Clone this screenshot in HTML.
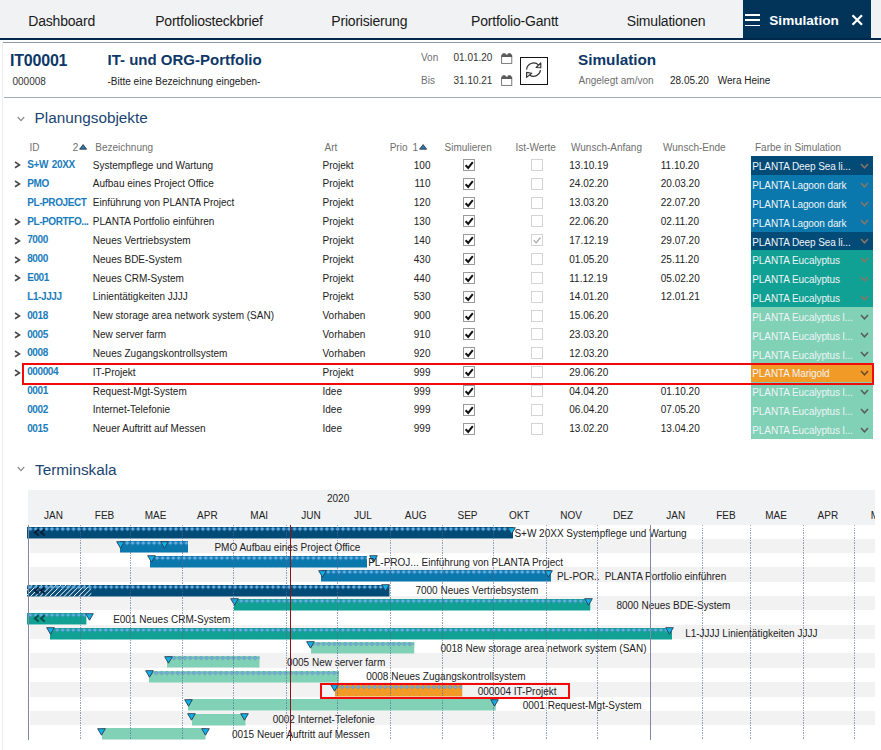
<!DOCTYPE html>
<html><head><meta charset="utf-8"><style>
*{box-sizing:border-box}
html,body{margin:0;padding:0}
body{width:881px;height:750px;overflow:hidden;position:relative;background:#fff;font-family:"Liberation Sans",sans-serif;color:#222}
.a{position:absolute;white-space:nowrap}
.tab{position:absolute;top:0;height:38px;line-height:38px;font-size:14px;letter-spacing:-0.2px;color:#1a1a1a}
.t10{font-size:10px}
.hd{font-size:10px;color:#6f6f6f}
.id{font-size:10px;font-weight:bold;color:#1a7cbc;letter-spacing:-0.4px;word-spacing:1.5px}
.cb{position:absolute;width:12px;height:12px;border:1.3px solid #9a9a9a;background:#fff}
.cb2{position:absolute;width:12px;height:12px;border:1px solid #d4d4d4;background:#fff}
.fb{position:absolute;left:751px;width:122px;font-size:10px;color:#f2f6f8;padding-left:1.3px;letter-spacing:-0.1px}
.gl{position:absolute;font-size:10px;color:#222;white-space:nowrap}
.bar{position:absolute;height:11.5px}
.tri{position:absolute;width:0;height:0}
</style></head><body>

<div class="a" style="left:0;top:0;width:881px;height:38px;background:#f1f2f4"></div>
<div class="a" style="left:743px;top:0;width:128px;height:38px;background:#02345a"></div>
<div class="a" style="left:0;top:38px;width:881px;height:2px;background:#00284c"></div>
<div class="tab" style="left:28.299999999999997px;top:1.8px">Dashboard</div>
<div class="tab" style="left:155.20000000000002px;top:1.8px">Portfoliosteckbrief</div>
<div class="tab" style="left:331.29999999999995px;top:1.8px">Priorisierung</div>
<div class="tab" style="left:471.0px;top:1.8px">Portfolio-Gantt</div>
<div class="tab" style="left:626.8px;top:1.8px">Simulationen</div>
<div class="a" style="left:745px;top:14.2px;width:14.5px;height:1.6px;background:#fff"></div>
<div class="a" style="left:745px;top:19.4px;width:14.5px;height:1.6px;background:#fff"></div>
<div class="a" style="left:745px;top:24.6px;width:14.5px;height:1.6px;background:#fff"></div>
<div class="a" style="left:769.3px;top:1.5px;height:38px;line-height:38px;font-size:13.6px;font-weight:bold;color:#fff">Simulation</div>
<svg class="a" style="left:851px;top:14px" width="13" height="12" viewBox="0 0 13 12"><path d="M1.5 1.2 L11 10.8 M11 1.2 L1.5 10.8" stroke="#fff" stroke-width="2.2"/></svg>
<div class="a" style="left:2px;top:42px;width:1px;height:708px;background:#ececec"></div>
<div class="a" style="left:3px;top:42px;width:878px;height:1px;background:#8e99a8"></div>
<div class="a" style="left:4px;top:97px;width:877px;height:1px;background:#a3abb6"></div>
<div class="a" style="left:10px;top:51.5px;font-size:16px;font-weight:bold;color:#0d3868;letter-spacing:-0.2px">IT00001</div>
<div class="a" style="left:12.5px;top:75.8px;font-size:10px;color:#333">000008</div>
<div class="a" style="left:107.5px;top:51.2px;font-size:15px;font-weight:bold;color:#0d3868">IT- und ORG-Portfolio</div>
<div class="a" style="left:107.5px;top:75.8px;font-size:10px;color:#222">-Bitte eine Bezeichnung eingeben-</div>
<div class="a" style="left:421px;top:51.5px;font-size:10px;color:#6f6f6f">Von</div>
<div class="a" style="left:421px;top:74.5px;font-size:10px;color:#6f6f6f">Bis</div>
<div class="a" style="left:453.5px;top:51.5px;font-size:10px;color:#333">01.01.20</div>
<div class="a" style="left:453.5px;top:74.5px;font-size:10px;color:#333">31.10.21</div>
<svg class="a" style="left:501px;top:53.1px" width="12" height="11" viewBox="0 0 12 11"><rect x="0.6" y="3.2" width="10.2" height="7.2" fill="#fff" stroke="#6b6b6b" stroke-width="0.9"/><rect x="0.3" y="1.6" width="10.8" height="2.4" fill="#5a5a5a"/><rect x="1.2" y="0.2" width="3.6" height="2.4" rx="1" fill="#5a5a5a"/><rect x="6.6" y="0.2" width="3.6" height="2.4" rx="1" fill="#5a5a5a"/></svg>
<svg class="a" style="left:501px;top:75.2px" width="12" height="11" viewBox="0 0 12 11"><rect x="0.6" y="3.2" width="10.2" height="7.2" fill="#fff" stroke="#6b6b6b" stroke-width="0.9"/><rect x="0.3" y="1.6" width="10.8" height="2.4" fill="#5a5a5a"/><rect x="1.2" y="0.2" width="3.6" height="2.4" rx="1" fill="#5a5a5a"/><rect x="6.6" y="0.2" width="3.6" height="2.4" rx="1" fill="#5a5a5a"/></svg>
<div class="a" style="left:520.2px;top:57.2px;width:27.6px;height:27.5px;border:1.4px solid #151515"></div>
<svg class="a" style="left:520.2px;top:57.2px" width="28" height="28" viewBox="0 0 28 28"><path d="M6.6 12.6 A7.1 7.1 0 0 1 18.5 7.9" fill="none" stroke="#333" stroke-width="1.15"/><path d="M20.8 5.8 L20.8 10.8 L16.1 10.5 Z" fill="#e8e8e8" stroke="#333" stroke-width="1.1" stroke-linejoin="round"/><path d="M20.5 13.2 A7.1 7.1 0 0 1 9.7 18.2" fill="none" stroke="#333" stroke-width="1.15"/><path d="M6.6 15.4 L6.6 20.4 L11.8 16.3 Z" fill="#e8e8e8" stroke="#333" stroke-width="1.1" stroke-linejoin="round"/></svg>
<div class="a" style="left:578px;top:51px;font-size:15.3px;font-weight:bold;color:#0d3868">Simulation</div>
<div class="a" style="left:578.5px;top:74.5px;font-size:10px;color:#6f6f6f">Angelegt am/von</div>
<div class="a" style="left:670px;top:74.5px;font-size:10px;color:#222">28.05.20</div>
<div class="a" style="left:717.8px;top:74.5px;font-size:10px;color:#222">Wera Heine</div>
<svg class="a" style="left:16.5px;top:115.5px" width="8" height="6" viewBox="0 0 8 6"><path d="M0.8 1 L4 4.6 L7.2 1" fill="none" stroke="#8a8a8a" stroke-width="1.2"/></svg>
<div class="a" style="left:34.6px;top:108.6px;font-size:15.3px;color:#1a4470">Planungsobjekte</div>
<svg class="a" style="left:16.5px;top:466.2px" width="8" height="6" viewBox="0 0 8 6"><path d="M0.8 1 L4 4.6 L7.2 1" fill="none" stroke="#8a8a8a" stroke-width="1.2"/></svg>
<div class="a" style="left:35px;top:461.2px;font-size:15.3px;color:#1a4470">Terminskala</div>
<div class="a hd" style="left:29.5px;top:141.5px">ID</div>
<div class="a hd" style="left:72.7px;top:141.5px">2</div>
<svg class="a" style="left:78.6px;top:144.3px" width="9" height="6" viewBox="0 0 9 6"><path d="M0.6 5.2 L4.1 0.6 L7.6 5.2 Z" fill="#2a7ab8" stroke="#2a2a2a" stroke-width="0.8" stroke-linejoin="round"/></svg>
<div class="a hd" style="left:95.3px;top:141.5px">Bezeichnung</div>
<div class="a hd" style="left:324.5px;top:141.5px">Art</div>
<div class="a hd" style="left:389.7px;top:141.5px">Prio</div>
<div class="a hd" style="left:412.5px;top:141.5px">1</div>
<svg class="a" style="left:419px;top:144.3px" width="9" height="6" viewBox="0 0 9 6"><path d="M0.6 5.2 L4.1 0.6 L7.6 5.2 Z" fill="#2a7ab8" stroke="#2a2a2a" stroke-width="0.8" stroke-linejoin="round"/></svg>
<div class="a hd" style="left:444.5px;top:141.5px">Simulieren</div>
<div class="a hd" style="left:515.5px;top:141.5px">Ist-Werte</div>
<div class="a hd" style="left:571px;top:141.5px">Wunsch-Anfang</div>
<div class="a hd" style="left:663px;top:141.5px">Wunsch-Ende</div>
<div class="a hd" style="left:755px;top:141.5px">Farbe in Simulation</div>
<svg class="a" style="left:13.8px;top:161.39999999999998px" width="7" height="8" viewBox="0 0 7 8"><path d="M1 1 L5.4 3.9 L1 6.8" fill="none" stroke="#4a4a4a" stroke-width="1.7"/></svg>
<div class="a id" style="left:27.2px;top:159.1px">S+W 20XX</div>
<div class="a t10" style="left:92.8px;top:159.6px;color:#222">Systempflege und Wartung</div>
<div class="a t10" style="left:322.5px;top:159.6px;color:#222">Projekt</div>
<div class="a t10" style="left:380px;top:159.6px;width:50.5px;text-align:right;color:#222">100</div>
<div class="cb" style="left:463.3px;top:159.0px"></div>
<svg class="a" style="left:463.3px;top:159.0px" width="12" height="12" viewBox="0 0 12 12"><path d="M2.6 6.3 L5.2 8.9 L9.8 3.2" fill="none" stroke="#111" stroke-width="2"/></svg>
<div class="cb2" style="left:531.3px;top:159.0px"></div>
<div class="a t10" style="left:569.3px;top:159.6px;color:#222">13.10.19</div>
<div class="a t10" style="left:660.8px;top:159.6px;color:#222">11.10.20</div>
<div class="fb" style="top:156.2px;height:19.029999999999998px;line-height:21.029999999999998px;background:#034b77;color:#eef4f7">PLANTA Deep Sea li...</div>
<svg class="a" style="left:859.5px;top:162.89999999999998px" width="9" height="6" viewBox="0 0 9 6"><path d="M1 1 L4.5 4.8 L8 1" fill="none" stroke="#8a7565" stroke-width="1.5"/></svg>
<svg class="a" style="left:13.8px;top:180.22999999999996px" width="7" height="8" viewBox="0 0 7 8"><path d="M1 1 L5.4 3.9 L1 6.8" fill="none" stroke="#4a4a4a" stroke-width="1.7"/></svg>
<div class="a id" style="left:27.2px;top:177.92999999999998px">PMO</div>
<div class="a t10" style="left:92.8px;top:178.42999999999998px;color:#222">Aufbau eines Project Office</div>
<div class="a t10" style="left:322.5px;top:178.42999999999998px;color:#222">Projekt</div>
<div class="a t10" style="left:380px;top:178.42999999999998px;width:50.5px;text-align:right;color:#222">110</div>
<div class="cb" style="left:463.3px;top:177.82999999999998px"></div>
<svg class="a" style="left:463.3px;top:177.82999999999998px" width="12" height="12" viewBox="0 0 12 12"><path d="M2.6 6.3 L5.2 8.9 L9.8 3.2" fill="none" stroke="#111" stroke-width="2"/></svg>
<div class="cb2" style="left:531.3px;top:177.82999999999998px"></div>
<div class="a t10" style="left:569.3px;top:178.42999999999998px;color:#222">24.02.20</div>
<div class="a t10" style="left:660.8px;top:178.42999999999998px;color:#222">20.03.20</div>
<div class="fb" style="top:175.02999999999997px;height:19.029999999999998px;line-height:21.029999999999998px;background:#0a78ad;color:#eef4f7">PLANTA Lagoon dark</div>
<svg class="a" style="left:859.5px;top:181.72999999999996px" width="9" height="6" viewBox="0 0 9 6"><path d="M1 1 L4.5 4.8 L8 1" fill="none" stroke="#8a7565" stroke-width="1.5"/></svg>
<div class="a id" style="left:27.2px;top:196.76px">PL-PROJECT</div>
<div class="a t10" style="left:92.8px;top:197.26px;color:#222">Einführung von PLANTA Project</div>
<div class="a t10" style="left:322.5px;top:197.26px;color:#222">Projekt</div>
<div class="a t10" style="left:380px;top:197.26px;width:50.5px;text-align:right;color:#222">120</div>
<div class="cb" style="left:463.3px;top:196.66px"></div>
<svg class="a" style="left:463.3px;top:196.66px" width="12" height="12" viewBox="0 0 12 12"><path d="M2.6 6.3 L5.2 8.9 L9.8 3.2" fill="none" stroke="#111" stroke-width="2"/></svg>
<div class="cb2" style="left:531.3px;top:196.66px"></div>
<div class="a t10" style="left:569.3px;top:197.26px;color:#222">13.03.20</div>
<div class="a t10" style="left:660.8px;top:197.26px;color:#222">22.07.20</div>
<div class="fb" style="top:193.85999999999999px;height:19.029999999999998px;line-height:21.029999999999998px;background:#0a78ad;color:#eef4f7">PLANTA Lagoon dark</div>
<svg class="a" style="left:859.5px;top:200.55999999999997px" width="9" height="6" viewBox="0 0 9 6"><path d="M1 1 L4.5 4.8 L8 1" fill="none" stroke="#8a7565" stroke-width="1.5"/></svg>
<svg class="a" style="left:13.8px;top:217.89px" width="7" height="8" viewBox="0 0 7 8"><path d="M1 1 L5.4 3.9 L1 6.8" fill="none" stroke="#4a4a4a" stroke-width="1.7"/></svg>
<div class="a id" style="left:27.2px;top:215.59px">PL-PORTFO...</div>
<div class="a t10" style="left:92.8px;top:216.09px;color:#222">PLANTA Portfolio einführen</div>
<div class="a t10" style="left:322.5px;top:216.09px;color:#222">Projekt</div>
<div class="a t10" style="left:380px;top:216.09px;width:50.5px;text-align:right;color:#222">130</div>
<div class="cb" style="left:463.3px;top:215.49px"></div>
<svg class="a" style="left:463.3px;top:215.49px" width="12" height="12" viewBox="0 0 12 12"><path d="M2.6 6.3 L5.2 8.9 L9.8 3.2" fill="none" stroke="#111" stroke-width="2"/></svg>
<div class="cb2" style="left:531.3px;top:215.49px"></div>
<div class="a t10" style="left:569.3px;top:216.09px;color:#222">22.06.20</div>
<div class="a t10" style="left:660.8px;top:216.09px;color:#222">02.11.20</div>
<div class="fb" style="top:212.69px;height:19.029999999999998px;line-height:21.029999999999998px;background:#0a78ad;color:#eef4f7">PLANTA Lagoon dark</div>
<svg class="a" style="left:859.5px;top:219.39px" width="9" height="6" viewBox="0 0 9 6"><path d="M1 1 L4.5 4.8 L8 1" fill="none" stroke="#8a7565" stroke-width="1.5"/></svg>
<svg class="a" style="left:13.8px;top:236.71999999999997px" width="7" height="8" viewBox="0 0 7 8"><path d="M1 1 L5.4 3.9 L1 6.8" fill="none" stroke="#4a4a4a" stroke-width="1.7"/></svg>
<div class="a id" style="left:27.2px;top:234.42px">7000</div>
<div class="a t10" style="left:92.8px;top:234.92px;color:#222">Neues Vertriebsystem</div>
<div class="a t10" style="left:322.5px;top:234.92px;color:#222">Projekt</div>
<div class="a t10" style="left:380px;top:234.92px;width:50.5px;text-align:right;color:#222">140</div>
<div class="cb" style="left:463.3px;top:234.32px"></div>
<svg class="a" style="left:463.3px;top:234.32px" width="12" height="12" viewBox="0 0 12 12"><path d="M2.6 6.3 L5.2 8.9 L9.8 3.2" fill="none" stroke="#111" stroke-width="2"/></svg>
<div class="cb2" style="left:531.3px;top:234.32px"></div>
<svg class="a" style="left:531.3px;top:234.32px" width="12" height="12" viewBox="0 0 12 12"><path d="M2.8 6.3 L5.2 8.7 L9.5 3.5" fill="none" stroke="#b0b0b0" stroke-width="1.4"/></svg>
<div class="a t10" style="left:569.3px;top:234.92px;color:#222">17.12.19</div>
<div class="a t10" style="left:660.8px;top:234.92px;color:#222">29.07.20</div>
<div class="fb" style="top:231.51999999999998px;height:19.029999999999998px;line-height:21.029999999999998px;background:#034b77;color:#eef4f7">PLANTA Deep Sea li...</div>
<svg class="a" style="left:859.5px;top:238.21999999999997px" width="9" height="6" viewBox="0 0 9 6"><path d="M1 1 L4.5 4.8 L8 1" fill="none" stroke="#8a7565" stroke-width="1.5"/></svg>
<svg class="a" style="left:13.8px;top:255.54999999999995px" width="7" height="8" viewBox="0 0 7 8"><path d="M1 1 L5.4 3.9 L1 6.8" fill="none" stroke="#4a4a4a" stroke-width="1.7"/></svg>
<div class="a id" style="left:27.2px;top:253.24999999999997px">8000</div>
<div class="a t10" style="left:92.8px;top:253.74999999999997px;color:#222">Neues BDE-System</div>
<div class="a t10" style="left:322.5px;top:253.74999999999997px;color:#222">Projekt</div>
<div class="a t10" style="left:380px;top:253.74999999999997px;width:50.5px;text-align:right;color:#222">430</div>
<div class="cb" style="left:463.3px;top:253.14999999999998px"></div>
<svg class="a" style="left:463.3px;top:253.14999999999998px" width="12" height="12" viewBox="0 0 12 12"><path d="M2.6 6.3 L5.2 8.9 L9.8 3.2" fill="none" stroke="#111" stroke-width="2"/></svg>
<div class="cb2" style="left:531.3px;top:253.14999999999998px"></div>
<div class="a t10" style="left:569.3px;top:253.74999999999997px;color:#222">01.05.20</div>
<div class="a t10" style="left:660.8px;top:253.74999999999997px;color:#222">25.11.20</div>
<div class="fb" style="top:250.34999999999997px;height:19.029999999999998px;line-height:21.029999999999998px;background:#11a094;color:#eef4f7">PLANTA Eucalyptus</div>
<svg class="a" style="left:859.5px;top:257.04999999999995px" width="9" height="6" viewBox="0 0 9 6"><path d="M1 1 L4.5 4.8 L8 1" fill="none" stroke="#8a7565" stroke-width="1.5"/></svg>
<svg class="a" style="left:13.8px;top:274.37999999999994px" width="7" height="8" viewBox="0 0 7 8"><path d="M1 1 L5.4 3.9 L1 6.8" fill="none" stroke="#4a4a4a" stroke-width="1.7"/></svg>
<div class="a id" style="left:27.2px;top:272.0799999999999px">E001</div>
<div class="a t10" style="left:92.8px;top:272.5799999999999px;color:#222">Neues CRM-System</div>
<div class="a t10" style="left:322.5px;top:272.5799999999999px;color:#222">Projekt</div>
<div class="a t10" style="left:380px;top:272.5799999999999px;width:50.5px;text-align:right;color:#222">440</div>
<div class="cb" style="left:463.3px;top:271.97999999999996px"></div>
<svg class="a" style="left:463.3px;top:271.97999999999996px" width="12" height="12" viewBox="0 0 12 12"><path d="M2.6 6.3 L5.2 8.9 L9.8 3.2" fill="none" stroke="#111" stroke-width="2"/></svg>
<div class="cb2" style="left:531.3px;top:271.97999999999996px"></div>
<div class="a t10" style="left:569.3px;top:272.5799999999999px;color:#222">11.12.19</div>
<div class="a t10" style="left:660.8px;top:272.5799999999999px;color:#222">05.02.20</div>
<div class="fb" style="top:269.17999999999995px;height:19.029999999999998px;line-height:21.029999999999998px;background:#11a094;color:#eef4f7">PLANTA Eucalyptus</div>
<svg class="a" style="left:859.5px;top:275.87999999999994px" width="9" height="6" viewBox="0 0 9 6"><path d="M1 1 L4.5 4.8 L8 1" fill="none" stroke="#8a7565" stroke-width="1.5"/></svg>
<div class="a id" style="left:27.2px;top:290.90999999999997px">L1-JJJJ</div>
<div class="a t10" style="left:92.8px;top:291.40999999999997px;color:#222">Linientätigkeiten JJJJ</div>
<div class="a t10" style="left:322.5px;top:291.40999999999997px;color:#222">Projekt</div>
<div class="a t10" style="left:380px;top:291.40999999999997px;width:50.5px;text-align:right;color:#222">530</div>
<div class="cb" style="left:463.3px;top:290.81px"></div>
<svg class="a" style="left:463.3px;top:290.81px" width="12" height="12" viewBox="0 0 12 12"><path d="M2.6 6.3 L5.2 8.9 L9.8 3.2" fill="none" stroke="#111" stroke-width="2"/></svg>
<div class="cb2" style="left:531.3px;top:290.81px"></div>
<div class="a t10" style="left:569.3px;top:291.40999999999997px;color:#222">14.01.20</div>
<div class="a t10" style="left:660.8px;top:291.40999999999997px;color:#222">12.01.21</div>
<div class="fb" style="top:288.01px;height:19.029999999999998px;line-height:21.029999999999998px;background:#11a094;color:#eef4f7">PLANTA Eucalyptus</div>
<svg class="a" style="left:859.5px;top:294.71px" width="9" height="6" viewBox="0 0 9 6"><path d="M1 1 L4.5 4.8 L8 1" fill="none" stroke="#8a7565" stroke-width="1.5"/></svg>
<svg class="a" style="left:13.8px;top:312.03999999999996px" width="7" height="8" viewBox="0 0 7 8"><path d="M1 1 L5.4 3.9 L1 6.8" fill="none" stroke="#4a4a4a" stroke-width="1.7"/></svg>
<div class="a id" style="left:27.2px;top:309.73999999999995px">0018</div>
<div class="a t10" style="left:92.8px;top:310.23999999999995px;color:#222">New storage area network system (SAN)</div>
<div class="a t10" style="left:322.5px;top:310.23999999999995px;color:#222">Vorhaben</div>
<div class="a t10" style="left:380px;top:310.23999999999995px;width:50.5px;text-align:right;color:#222">900</div>
<div class="cb" style="left:463.3px;top:309.64px"></div>
<svg class="a" style="left:463.3px;top:309.64px" width="12" height="12" viewBox="0 0 12 12"><path d="M2.6 6.3 L5.2 8.9 L9.8 3.2" fill="none" stroke="#111" stroke-width="2"/></svg>
<div class="cb2" style="left:531.3px;top:309.64px"></div>
<div class="a t10" style="left:569.3px;top:310.23999999999995px;color:#222">15.06.20</div>
<div class="fb" style="top:306.84px;height:19.029999999999998px;line-height:21.029999999999998px;background:#80d1b5;color:#eef4f7">PLANTA Eucalyptus l...</div>
<svg class="a" style="left:859.5px;top:313.53999999999996px" width="9" height="6" viewBox="0 0 9 6"><path d="M1 1 L4.5 4.8 L8 1" fill="none" stroke="#5a5a5a" stroke-width="1.5"/></svg>
<svg class="a" style="left:13.8px;top:330.86999999999995px" width="7" height="8" viewBox="0 0 7 8"><path d="M1 1 L5.4 3.9 L1 6.8" fill="none" stroke="#4a4a4a" stroke-width="1.7"/></svg>
<div class="a id" style="left:27.2px;top:328.56999999999994px">0005</div>
<div class="a t10" style="left:92.8px;top:329.06999999999994px;color:#222">New server farm</div>
<div class="a t10" style="left:322.5px;top:329.06999999999994px;color:#222">Vorhaben</div>
<div class="a t10" style="left:380px;top:329.06999999999994px;width:50.5px;text-align:right;color:#222">910</div>
<div class="cb" style="left:463.3px;top:328.46999999999997px"></div>
<svg class="a" style="left:463.3px;top:328.46999999999997px" width="12" height="12" viewBox="0 0 12 12"><path d="M2.6 6.3 L5.2 8.9 L9.8 3.2" fill="none" stroke="#111" stroke-width="2"/></svg>
<div class="cb2" style="left:531.3px;top:328.46999999999997px"></div>
<div class="a t10" style="left:569.3px;top:329.06999999999994px;color:#222">23.03.20</div>
<div class="fb" style="top:325.66999999999996px;height:19.029999999999998px;line-height:21.029999999999998px;background:#80d1b5;color:#eef4f7">PLANTA Eucalyptus l...</div>
<svg class="a" style="left:859.5px;top:332.36999999999995px" width="9" height="6" viewBox="0 0 9 6"><path d="M1 1 L4.5 4.8 L8 1" fill="none" stroke="#5a5a5a" stroke-width="1.5"/></svg>
<svg class="a" style="left:13.8px;top:349.7px" width="7" height="8" viewBox="0 0 7 8"><path d="M1 1 L5.4 3.9 L1 6.8" fill="none" stroke="#4a4a4a" stroke-width="1.7"/></svg>
<div class="a id" style="left:27.2px;top:347.4px">0008</div>
<div class="a t10" style="left:92.8px;top:347.9px;color:#222">Neues Zugangskontrollsystem</div>
<div class="a t10" style="left:322.5px;top:347.9px;color:#222">Vorhaben</div>
<div class="a t10" style="left:380px;top:347.9px;width:50.5px;text-align:right;color:#222">920</div>
<div class="cb" style="left:463.3px;top:347.3px"></div>
<svg class="a" style="left:463.3px;top:347.3px" width="12" height="12" viewBox="0 0 12 12"><path d="M2.6 6.3 L5.2 8.9 L9.8 3.2" fill="none" stroke="#111" stroke-width="2"/></svg>
<div class="cb2" style="left:531.3px;top:347.3px"></div>
<div class="a t10" style="left:569.3px;top:347.9px;color:#222">12.03.20</div>
<div class="fb" style="top:344.5px;height:19.029999999999998px;line-height:21.029999999999998px;background:#80d1b5;color:#eef4f7">PLANTA Eucalyptus l...</div>
<svg class="a" style="left:859.5px;top:351.2px" width="9" height="6" viewBox="0 0 9 6"><path d="M1 1 L4.5 4.8 L8 1" fill="none" stroke="#5a5a5a" stroke-width="1.5"/></svg>
<svg class="a" style="left:13.8px;top:368.53px" width="7" height="8" viewBox="0 0 7 8"><path d="M1 1 L5.4 3.9 L1 6.8" fill="none" stroke="#4a4a4a" stroke-width="1.7"/></svg>
<div class="a id" style="left:27.2px;top:366.22999999999996px">000004</div>
<div class="a t10" style="left:92.8px;top:366.72999999999996px;color:#222">IT-Projekt</div>
<div class="a t10" style="left:322.5px;top:366.72999999999996px;color:#222">Projekt</div>
<div class="a t10" style="left:380px;top:366.72999999999996px;width:50.5px;text-align:right;color:#222">999</div>
<div class="cb" style="left:463.3px;top:366.13px"></div>
<svg class="a" style="left:463.3px;top:366.13px" width="12" height="12" viewBox="0 0 12 12"><path d="M2.6 6.3 L5.2 8.9 L9.8 3.2" fill="none" stroke="#111" stroke-width="2"/></svg>
<div class="cb2" style="left:531.3px;top:366.13px"></div>
<div class="a t10" style="left:569.3px;top:366.72999999999996px;color:#222">29.06.20</div>
<div class="fb" style="top:363.33px;height:20.43px;line-height:21.029999999999998px;background:#f29a28;color:#eef4f7">PLANTA Marigold</div>
<svg class="a" style="left:859.5px;top:370.03px" width="9" height="6" viewBox="0 0 9 6"><path d="M1 1 L4.5 4.8 L8 1" fill="none" stroke="#6a4a2a" stroke-width="1.5"/></svg>
<div class="a id" style="left:27.2px;top:385.05999999999995px">0001</div>
<div class="a t10" style="left:92.8px;top:385.55999999999995px;color:#222">Request-Mgt-System</div>
<div class="a t10" style="left:322.5px;top:385.55999999999995px;color:#222">Idee</div>
<div class="a t10" style="left:380px;top:385.55999999999995px;width:50.5px;text-align:right;color:#222">999</div>
<div class="cb" style="left:463.3px;top:384.96px"></div>
<svg class="a" style="left:463.3px;top:384.96px" width="12" height="12" viewBox="0 0 12 12"><path d="M2.6 6.3 L5.2 8.9 L9.8 3.2" fill="none" stroke="#111" stroke-width="2"/></svg>
<div class="cb2" style="left:531.3px;top:384.96px"></div>
<div class="a t10" style="left:569.3px;top:385.55999999999995px;color:#222">04.04.20</div>
<div class="a t10" style="left:660.8px;top:385.55999999999995px;color:#222">01.10.20</div>
<div class="fb" style="top:382.15999999999997px;height:19.029999999999998px;line-height:21.029999999999998px;background:#80d1b5;color:#eef4f7">PLANTA Eucalyptus l...</div>
<svg class="a" style="left:859.5px;top:388.85999999999996px" width="9" height="6" viewBox="0 0 9 6"><path d="M1 1 L4.5 4.8 L8 1" fill="none" stroke="#5a5a5a" stroke-width="1.5"/></svg>
<div class="a id" style="left:27.2px;top:403.88999999999993px">0002</div>
<div class="a t10" style="left:92.8px;top:404.38999999999993px;color:#222">Internet-Telefonie</div>
<div class="a t10" style="left:322.5px;top:404.38999999999993px;color:#222">Idee</div>
<div class="a t10" style="left:380px;top:404.38999999999993px;width:50.5px;text-align:right;color:#222">999</div>
<div class="cb" style="left:463.3px;top:403.78999999999996px"></div>
<svg class="a" style="left:463.3px;top:403.78999999999996px" width="12" height="12" viewBox="0 0 12 12"><path d="M2.6 6.3 L5.2 8.9 L9.8 3.2" fill="none" stroke="#111" stroke-width="2"/></svg>
<div class="cb2" style="left:531.3px;top:403.78999999999996px"></div>
<div class="a t10" style="left:569.3px;top:404.38999999999993px;color:#222">06.04.20</div>
<div class="a t10" style="left:660.8px;top:404.38999999999993px;color:#222">07.05.20</div>
<div class="fb" style="top:400.98999999999995px;height:19.029999999999998px;line-height:21.029999999999998px;background:#80d1b5;color:#eef4f7">PLANTA Eucalyptus l...</div>
<svg class="a" style="left:859.5px;top:407.68999999999994px" width="9" height="6" viewBox="0 0 9 6"><path d="M1 1 L4.5 4.8 L8 1" fill="none" stroke="#5a5a5a" stroke-width="1.5"/></svg>
<div class="a id" style="left:27.2px;top:422.71999999999997px">0015</div>
<div class="a t10" style="left:92.8px;top:423.21999999999997px;color:#222">Neuer Auftritt auf Messen</div>
<div class="a t10" style="left:322.5px;top:423.21999999999997px;color:#222">Idee</div>
<div class="a t10" style="left:380px;top:423.21999999999997px;width:50.5px;text-align:right;color:#222">999</div>
<div class="cb" style="left:463.3px;top:422.62px"></div>
<svg class="a" style="left:463.3px;top:422.62px" width="12" height="12" viewBox="0 0 12 12"><path d="M2.6 6.3 L5.2 8.9 L9.8 3.2" fill="none" stroke="#111" stroke-width="2"/></svg>
<div class="cb2" style="left:531.3px;top:422.62px"></div>
<div class="a t10" style="left:569.3px;top:423.21999999999997px;color:#222">13.02.20</div>
<div class="a t10" style="left:660.8px;top:423.21999999999997px;color:#222">13.04.20</div>
<div class="fb" style="top:419.82px;height:19.029999999999998px;line-height:21.029999999999998px;background:#80d1b5;color:#eef4f7">PLANTA Eucalyptus l...</div>
<svg class="a" style="left:859.5px;top:426.52px" width="9" height="6" viewBox="0 0 9 6"><path d="M1 1 L4.5 4.8 L8 1" fill="none" stroke="#5a5a5a" stroke-width="1.5"/></svg>
<div class="a" style="left:22px;top:363.2px;width:851.5px;height:21.6px;border:2px solid #f20a0a"></div>
<div class="a" style="left:28px;top:490px;width:847px;height:35px;background:#f1f2f4"></div>
<div class="a" style="left:327px;top:493.2px;font-size:10px;color:#222">2020</div>
<div class="a" style="left:13.549999999999997px;width:80px;text-align:center;top:509.7px;font-size:10px;color:#222">JAN</div>
<div class="a" style="left:64.55px;width:80px;text-align:center;top:509.7px;font-size:10px;color:#222">FEB</div>
<div class="a" style="left:115.54999999999998px;width:80px;text-align:center;top:509.7px;font-size:10px;color:#222">MAE</div>
<div class="a" style="left:167.39999999999998px;width:80px;text-align:center;top:509.7px;font-size:10px;color:#222">APR</div>
<div class="a" style="left:219.24999999999994px;width:80px;text-align:center;top:509.7px;font-size:10px;color:#222">MAI</div>
<div class="a" style="left:271.09999999999997px;width:80px;text-align:center;top:509.7px;font-size:10px;color:#222">JUN</div>
<div class="a" style="left:322.95px;width:80px;text-align:center;top:509.7px;font-size:10px;color:#222">JUL</div>
<div class="a" style="left:375.65px;width:80px;text-align:center;top:509.7px;font-size:10px;color:#222">AUG</div>
<div class="a" style="left:427.5px;width:80px;text-align:center;top:509.7px;font-size:10px;color:#222">SEP</div>
<div class="a" style="left:479.35px;width:80px;text-align:center;top:509.7px;font-size:10px;color:#222">OKT</div>
<div class="a" style="left:531.2px;width:80px;text-align:center;top:509.7px;font-size:10px;color:#222">NOV</div>
<div class="a" style="left:583.05px;width:80px;text-align:center;top:509.7px;font-size:10px;color:#222">DEZ</div>
<div class="a" style="left:635.75px;width:80px;text-align:center;top:509.7px;font-size:10px;color:#222">JAN</div>
<div class="a" style="left:685.9000000000001px;width:80px;text-align:center;top:509.7px;font-size:10px;color:#222">FEB</div>
<div class="a" style="left:736.05px;width:80px;text-align:center;top:509.7px;font-size:10px;color:#222">MAE</div>
<div class="a" style="left:787.9px;width:80px;text-align:center;top:509.7px;font-size:10px;color:#222">APR</div>
<div class="a" style="left:839.75px;width:80px;text-align:center;top:509.7px;font-size:10px;color:#222">MAI</div>
<div class="a" style="left:30px;top:538.5600000000001px;width:845px;height:14.36px;background:#f2f2f2"></div>
<div class="a" style="left:30px;top:567.2800000000001px;width:845px;height:14.36px;background:#f2f2f2"></div>
<div class="a" style="left:30px;top:596.0px;width:845px;height:14.36px;background:#f2f2f2"></div>
<div class="a" style="left:30px;top:624.72px;width:845px;height:14.36px;background:#f2f2f2"></div>
<div class="a" style="left:30px;top:653.44px;width:845px;height:14.36px;background:#f2f2f2"></div>
<div class="a" style="left:30px;top:682.1600000000001px;width:845px;height:14.36px;background:#f2f2f2"></div>
<div class="a" style="left:30px;top:710.8800000000001px;width:845px;height:14.36px;background:#f2f2f2"></div>
<svg width="0" height="0" style="position:absolute"><defs>
<pattern id="pd" x="0" y="0" width="5.39" height="11.5" patternUnits="userSpaceOnUse"><path d="M2.7 0.2 L4.9 2.0 L2.7 3.8 L0.5 2.0 Z" fill="#66b2e8" stroke="#4a8cc2" stroke-width="0.4"/><rect x="2.45" y="4.3" width="0.5" height="0.8" fill="#5a9ccc" opacity="0.6"/></pattern>
<pattern id="pl" x="0" y="0" width="5.39" height="11.5" patternUnits="userSpaceOnUse"><path d="M2.7 0.2 L4.9 2.0 L2.7 3.8 L0.5 2.0 Z" fill="#74aede" stroke="#5f8fb8" stroke-width="0.6"/><rect x="2.45" y="4.3" width="0.5" height="0.8" fill="#6a90b0" opacity="0.6"/></pattern>
<pattern id="ph" x="0" y="0" width="4.8" height="11.5" patternUnits="userSpaceOnUse" patternTransform="skewX(-45)"><rect x="0" y="0" width="1" height="11.5" fill="#ffffff"/></pattern>
</defs></svg>
<svg class="a" style="left:27px;top:527.1px;overflow:visible" width="486" height="11.5">
<rect x="0" y="0" width="486" height="11.5" fill="#034b77"/>
<g transform="translate(0.7,0)"><rect x="-0.7" y="0" width="486" height="5.5" fill="url(#pd)"/></g>
<path d="M11.7 2.3 L7.9 5.4 L11.7 8.5 M17.7 2.3 L13.9 5.4 L17.7 8.5" fill="none" stroke="#0a1f3a" stroke-width="2"/>
</svg>
<svg class="a" style="left:507.0px;top:526.5px" width="9" height="8" viewBox="0 0 9 8"><path d="M0.7 0.7 L8.3 0.7 L4.5 7.2 Z" fill="#0cb1ee" stroke="#2d3b4a" stroke-width="0.9" stroke-linejoin="miter"/></svg>
<div class="gl" style="left:514.4px;top:527.8000000000001px">S+W 20XX Systempflege und Wartung</div>
<svg class="a" style="left:120px;top:541.46px;overflow:visible" width="68" height="11.5">
<rect x="0" y="0" width="68" height="11.5" fill="#0a78ad"/>
<g transform="translate(-0.9,0)"><rect x="0.9" y="0" width="68" height="5.5" fill="url(#pd)"/></g>
</svg>
<svg class="a" style="left:116.3px;top:540.86px" width="9" height="8" viewBox="0 0 9 8"><path d="M0.7 0.7 L8.3 0.7 L4.5 7.2 Z" fill="#0cb1ee" stroke="#2d3b4a" stroke-width="0.9" stroke-linejoin="miter"/></svg>
<svg class="a" style="left:159.5px;top:540.86px" width="9" height="8" viewBox="0 0 9 8"><path d="M0.7 0.7 L8.3 0.7 L4.5 7.2 Z" fill="#0cb1ee" stroke="#2d3b4a" stroke-width="0.9" stroke-linejoin="miter"/></svg>
<div class="gl" style="left:214.4px;top:542.1600000000001px">PMO Aufbau eines Project Office</div>
<svg class="a" style="left:150px;top:555.82px;overflow:visible" width="217" height="11.5">
<rect x="0" y="0" width="217" height="11.5" fill="#0a78ad"/>
<g transform="translate(-0.9,0)"><rect x="0.9" y="0" width="217" height="5.5" fill="url(#pd)"/></g>
</svg>
<svg class="a" style="left:146.6px;top:555.22px" width="9" height="8" viewBox="0 0 9 8"><path d="M0.7 0.7 L8.3 0.7 L4.5 7.2 Z" fill="#0cb1ee" stroke="#2d3b4a" stroke-width="0.9" stroke-linejoin="miter"/></svg>
<svg class="a" style="left:369.3px;top:555.22px" width="9" height="8" viewBox="0 0 9 8"><path d="M0.7 0.7 L8.3 0.7 L4.5 7.2 Z" fill="#0cb1ee" stroke="#2d3b4a" stroke-width="0.9" stroke-linejoin="miter"/></svg>
<div class="gl" style="left:368.15px;top:556.5200000000001px">PL-PROJ... Einführung von PLANTA Project</div>
<svg class="a" style="left:321.25px;top:570.1800000000001px;overflow:visible" width="230.0" height="11.5">
<rect x="0" y="0" width="230.0" height="11.5" fill="#0a78ad"/>
<g transform="translate(-0.9,0)"><rect x="0.9" y="0" width="230.0" height="5.5" fill="url(#pd)"/></g>
</svg>
<svg class="a" style="left:318.3px;top:569.58px" width="9" height="8" viewBox="0 0 9 8"><path d="M0.7 0.7 L8.3 0.7 L4.5 7.2 Z" fill="#0cb1ee" stroke="#2d3b4a" stroke-width="0.9" stroke-linejoin="miter"/></svg>
<svg class="a" style="left:544.4000000000001px;top:569.58px" width="9" height="8" viewBox="0 0 9 8"><path d="M0.7 0.7 L8.3 0.7 L4.5 7.2 Z" fill="#0cb1ee" stroke="#2d3b4a" stroke-width="0.9" stroke-linejoin="miter"/></svg>
<div class="gl" style="left:556.9px;top:570.8800000000001px">PL-POR..<span style="margin-left:5px">PLANTA Portfolio einführen</span></div>
<svg class="a" style="left:27px;top:584.5400000000001px;overflow:visible" width="362.5" height="11.5">
<rect x="0" y="0" width="362.5" height="11.5" fill="#034b77"/>
<rect x="0" y="0" width="64.3" height="11.5" fill="url(#ph)"/>
<g transform="translate(0.7,0)"><rect x="-0.7" y="0" width="362.5" height="5.5" fill="url(#pd)"/></g>
<path d="M11.7 2.3 L7.9 5.4 L11.7 8.5 M17.7 2.3 L13.9 5.4 L17.7 8.5" fill="none" stroke="#0a1f3a" stroke-width="2"/>
</svg>
<svg class="a" style="left:381.2px;top:583.94px" width="9" height="8" viewBox="0 0 9 8"><path d="M0.7 0.7 L8.3 0.7 L4.5 7.2 Z" fill="#0cb1ee" stroke="#2d3b4a" stroke-width="0.9" stroke-linejoin="miter"/></svg>
<div class="gl" style="left:415.4px;top:585.2400000000001px">7000 Neues Vertriebsystem</div>
<svg class="a" style="left:233.75px;top:598.9px;overflow:visible" width="356.25" height="11.5">
<rect x="0" y="0" width="356.25" height="11.5" fill="#11a094"/>
<g transform="translate(-0.9,0)"><rect x="0.9" y="0" width="356.25" height="5.5" fill="url(#pd)"/></g>
</svg>
<svg class="a" style="left:229.89999999999998px;top:598.3px" width="9" height="8" viewBox="0 0 9 8"><path d="M0.7 0.7 L8.3 0.7 L4.5 7.2 Z" fill="#0cb1ee" stroke="#2d3b4a" stroke-width="0.9" stroke-linejoin="miter"/></svg>
<svg class="a" style="left:583.5px;top:598.3px" width="9" height="8" viewBox="0 0 9 8"><path d="M0.7 0.7 L8.3 0.7 L4.5 7.2 Z" fill="#0cb1ee" stroke="#2d3b4a" stroke-width="0.9" stroke-linejoin="miter"/></svg>
<div class="gl" style="left:616.4px;top:599.6px">8000 Neues BDE-System</div>
<svg class="a" style="left:27px;top:613.26px;overflow:visible" width="59.400000000000006" height="11.5">
<rect x="0" y="0" width="59.400000000000006" height="11.5" fill="#11a094"/>
<g transform="translate(0.7,0)"><rect x="-0.7" y="0" width="59.400000000000006" height="5.5" fill="url(#pd)"/></g>
<path d="M11.7 2.3 L7.9 5.4 L11.7 8.5 M17.7 2.3 L13.9 5.4 L17.7 8.5" fill="none" stroke="#0b4f48" stroke-width="2"/>
</svg>
<svg class="a" style="left:85.2px;top:612.66px" width="9" height="8" viewBox="0 0 9 8"><path d="M0.7 0.7 L8.3 0.7 L4.5 7.2 Z" fill="#0cb1ee" stroke="#2d3b4a" stroke-width="0.9" stroke-linejoin="miter"/></svg>
<div class="gl" style="left:113.15px;top:613.96px">E001 Neues CRM-System</div>
<svg class="a" style="left:50px;top:627.62px;overflow:visible" width="622" height="11.5">
<rect x="0" y="0" width="622" height="11.5" fill="#11a094"/>
<g transform="translate(-0.9,0)"><rect x="0.9" y="0" width="622" height="5.5" fill="url(#pd)"/></g>
</svg>
<svg class="a" style="left:46.300000000000004px;top:627.02px" width="9" height="8" viewBox="0 0 9 8"><path d="M0.7 0.7 L8.3 0.7 L4.5 7.2 Z" fill="#0cb1ee" stroke="#2d3b4a" stroke-width="0.9" stroke-linejoin="miter"/></svg>
<svg class="a" style="left:665.1px;top:627.02px" width="9" height="8" viewBox="0 0 9 8"><path d="M0.7 0.7 L8.3 0.7 L4.5 7.2 Z" fill="#0cb1ee" stroke="#2d3b4a" stroke-width="0.9" stroke-linejoin="miter"/></svg>
<div class="gl" style="left:685.15px;top:628.32px">L1-JJJJ Linientätigkeiten JJJJ</div>
<svg class="a" style="left:310.5px;top:641.98px;overflow:visible" width="103.25" height="11.5">
<rect x="0" y="0" width="103.25" height="11.5" fill="#80d1b5"/>
<g transform="translate(-0.9,0)"><rect x="0.9" y="0" width="103.25" height="5.5" fill="url(#pl)"/></g>
</svg>
<svg class="a" style="left:306.4px;top:641.38px" width="9" height="8" viewBox="0 0 9 8"><path d="M0.7 0.7 L8.3 0.7 L4.5 7.2 Z" fill="#0cb1ee" stroke="#2d3b4a" stroke-width="0.9" stroke-linejoin="miter"/></svg>
<div class="gl" style="left:440.4px;top:642.6800000000001px">0018 New storage area network system (SAN)</div>
<svg class="a" style="left:167px;top:656.34px;overflow:visible" width="92.5" height="11.5">
<rect x="0" y="0" width="92.5" height="11.5" fill="#80d1b5"/>
<g transform="translate(-0.9,0)"><rect x="0.9" y="0" width="92.5" height="5.5" fill="url(#pl)"/></g>
</svg>
<svg class="a" style="left:163.6px;top:655.74px" width="9" height="8" viewBox="0 0 9 8"><path d="M0.7 0.7 L8.3 0.7 L4.5 7.2 Z" fill="#0cb1ee" stroke="#2d3b4a" stroke-width="0.9" stroke-linejoin="miter"/></svg>
<div class="gl" style="left:286.9px;top:657.0400000000001px">0005 New server farm</div>
<svg class="a" style="left:149.25px;top:670.7px;overflow:visible" width="190.0" height="11.5">
<rect x="0" y="0" width="190.0" height="11.5" fill="#80d1b5"/>
<g transform="translate(-0.9,0)"><rect x="0.9" y="0" width="190.0" height="5.5" fill="url(#pl)"/></g>
</svg>
<svg class="a" style="left:144.89999999999998px;top:670.1px" width="9" height="8" viewBox="0 0 9 8"><path d="M0.7 0.7 L8.3 0.7 L4.5 7.2 Z" fill="#0cb1ee" stroke="#2d3b4a" stroke-width="0.9" stroke-linejoin="miter"/></svg>
<div class="gl" style="left:366.15px;top:671.4000000000001px">0008 Neues Zugangskontrollsystem</div>
<svg class="a" style="left:334.5px;top:685.0600000000001px;overflow:visible" width="127.25" height="11.5">
<rect x="0" y="0" width="127.25" height="11.5" fill="#f29a28"/>
<g transform="translate(-0.9,0)"><rect x="0.9" y="0" width="127.25" height="5.5" fill="url(#pl)"/></g>
</svg>
<svg class="a" style="left:330.2px;top:684.46px" width="9" height="8" viewBox="0 0 9 8"><path d="M0.7 0.7 L8.3 0.7 L4.5 7.2 Z" fill="#0cb1ee" stroke="#2d3b4a" stroke-width="0.9" stroke-linejoin="miter"/></svg>
<div class="gl" style="left:477.65px;top:685.7600000000001px">000004 IT-Projekt</div>
<svg class="a" style="left:188px;top:699.42px;overflow:visible" width="307.75" height="11.5">
<rect x="0" y="0" width="307.75" height="11.5" fill="#80d1b5"/>
</svg>
<svg class="a" style="left:184.0px;top:698.8199999999999px" width="9" height="8" viewBox="0 0 9 8"><path d="M0.7 0.7 L8.3 0.7 L4.5 7.2 Z" fill="#0cb1ee" stroke="#2d3b4a" stroke-width="0.9" stroke-linejoin="miter"/></svg>
<svg class="a" style="left:490.0px;top:698.8199999999999px" width="9" height="8" viewBox="0 0 9 8"><path d="M0.7 0.7 L8.3 0.7 L4.5 7.2 Z" fill="#0cb1ee" stroke="#2d3b4a" stroke-width="0.9" stroke-linejoin="miter"/></svg>
<div class="gl" style="left:522.65px;top:700.12px">0001 Request-Mgt-System</div>
<svg class="a" style="left:191.5px;top:713.7800000000001px;overflow:visible" width="53.5" height="11.5">
<rect x="0" y="0" width="53.5" height="11.5" fill="#80d1b5"/>
</svg>
<svg class="a" style="left:187.39999999999998px;top:713.1800000000001px" width="9" height="8" viewBox="0 0 9 8"><path d="M0.7 0.7 L8.3 0.7 L4.5 7.2 Z" fill="#0cb1ee" stroke="#2d3b4a" stroke-width="0.9" stroke-linejoin="miter"/></svg>
<svg class="a" style="left:240.1px;top:713.1800000000001px" width="9" height="8" viewBox="0 0 9 8"><path d="M0.7 0.7 L8.3 0.7 L4.5 7.2 Z" fill="#0cb1ee" stroke="#2d3b4a" stroke-width="0.9" stroke-linejoin="miter"/></svg>
<div class="gl" style="left:272.65px;top:714.4800000000001px">0002 Internet-Telefonie</div>
<svg class="a" style="left:101.5px;top:728.14px;overflow:visible" width="103.5" height="11.5">
<rect x="0" y="0" width="103.5" height="11.5" fill="#80d1b5"/>
</svg>
<svg class="a" style="left:97.3px;top:727.54px" width="9" height="8" viewBox="0 0 9 8"><path d="M0.7 0.7 L8.3 0.7 L4.5 7.2 Z" fill="#0cb1ee" stroke="#2d3b4a" stroke-width="0.9" stroke-linejoin="miter"/></svg>
<svg class="a" style="left:200.5px;top:727.54px" width="9" height="8" viewBox="0 0 9 8"><path d="M0.7 0.7 L8.3 0.7 L4.5 7.2 Z" fill="#0cb1ee" stroke="#2d3b4a" stroke-width="0.9" stroke-linejoin="miter"/></svg>
<div class="gl" style="left:231.9px;top:728.84px">0015 Neuer Auftritt auf Messen</div>
<div class="a" style="left:28px;top:525px;width:1px;height:215px;background:#7f89a6"></div>
<div class="a" style="left:80px;top:525px;width:1px;height:215px;background:repeating-linear-gradient(rgba(85,100,150,0.6) 0 1.2px,transparent 1.2px 2.5px)"></div>
<div class="a" style="left:130px;top:525px;width:1px;height:215px;background:repeating-linear-gradient(rgba(85,100,150,0.6) 0 1.2px,transparent 1.2px 2.5px)"></div>
<div class="a" style="left:182px;top:525px;width:1px;height:215px;background:repeating-linear-gradient(rgba(85,100,150,0.6) 0 1.2px,transparent 1.2px 2.5px)"></div>
<div class="a" style="left:233px;top:525px;width:1px;height:215px;background:repeating-linear-gradient(rgba(85,100,150,0.6) 0 1.2px,transparent 1.2px 2.5px)"></div>
<div class="a" style="left:286px;top:525px;width:1px;height:215px;background:repeating-linear-gradient(rgba(85,100,150,0.6) 0 1.2px,transparent 1.2px 2.5px)"></div>
<div class="a" style="left:337px;top:525px;width:1px;height:215px;background:repeating-linear-gradient(rgba(85,100,150,0.6) 0 1.2px,transparent 1.2px 2.5px)"></div>
<div class="a" style="left:390px;top:525px;width:1px;height:215px;background:repeating-linear-gradient(rgba(85,100,150,0.6) 0 1.2px,transparent 1.2px 2.5px)"></div>
<div class="a" style="left:442px;top:525px;width:1px;height:215px;background:repeating-linear-gradient(rgba(85,100,150,0.6) 0 1.2px,transparent 1.2px 2.5px)"></div>
<div class="a" style="left:493px;top:525px;width:1px;height:215px;background:repeating-linear-gradient(rgba(85,100,150,0.6) 0 1.2px,transparent 1.2px 2.5px)"></div>
<div class="a" style="left:546px;top:525px;width:1px;height:215px;background:repeating-linear-gradient(rgba(85,100,150,0.6) 0 1.2px,transparent 1.2px 2.5px)"></div>
<div class="a" style="left:597px;top:525px;width:1px;height:215px;background:repeating-linear-gradient(rgba(85,100,150,0.6) 0 1.2px,transparent 1.2px 2.5px)"></div>
<div class="a" style="left:650px;top:525px;width:1px;height:215px;background:#7f89a6"></div>
<div class="a" style="left:702px;top:525px;width:1px;height:215px;background:repeating-linear-gradient(rgba(85,100,150,0.6) 0 1.2px,transparent 1.2px 2.5px)"></div>
<div class="a" style="left:750px;top:525px;width:1px;height:215px;background:repeating-linear-gradient(rgba(85,100,150,0.6) 0 1.2px,transparent 1.2px 2.5px)"></div>
<div class="a" style="left:803px;top:525px;width:1px;height:215px;background:repeating-linear-gradient(rgba(85,100,150,0.6) 0 1.2px,transparent 1.2px 2.5px)"></div>
<div class="a" style="left:854px;top:525px;width:1px;height:215px;background:repeating-linear-gradient(rgba(85,100,150,0.6) 0 1.2px,transparent 1.2px 2.5px)"></div>
<div class="a" style="left:319.5px;top:683px;width:250px;height:15.75px;border:2px solid #f20a0a"></div>
<div class="a" style="left:290px;top:524.8px;width:1.2px;height:216px;background:#8c1414"></div>
<div class="a" style="left:875px;top:488px;width:6px;height:258px;background:#fff"></div>
</body></html>
